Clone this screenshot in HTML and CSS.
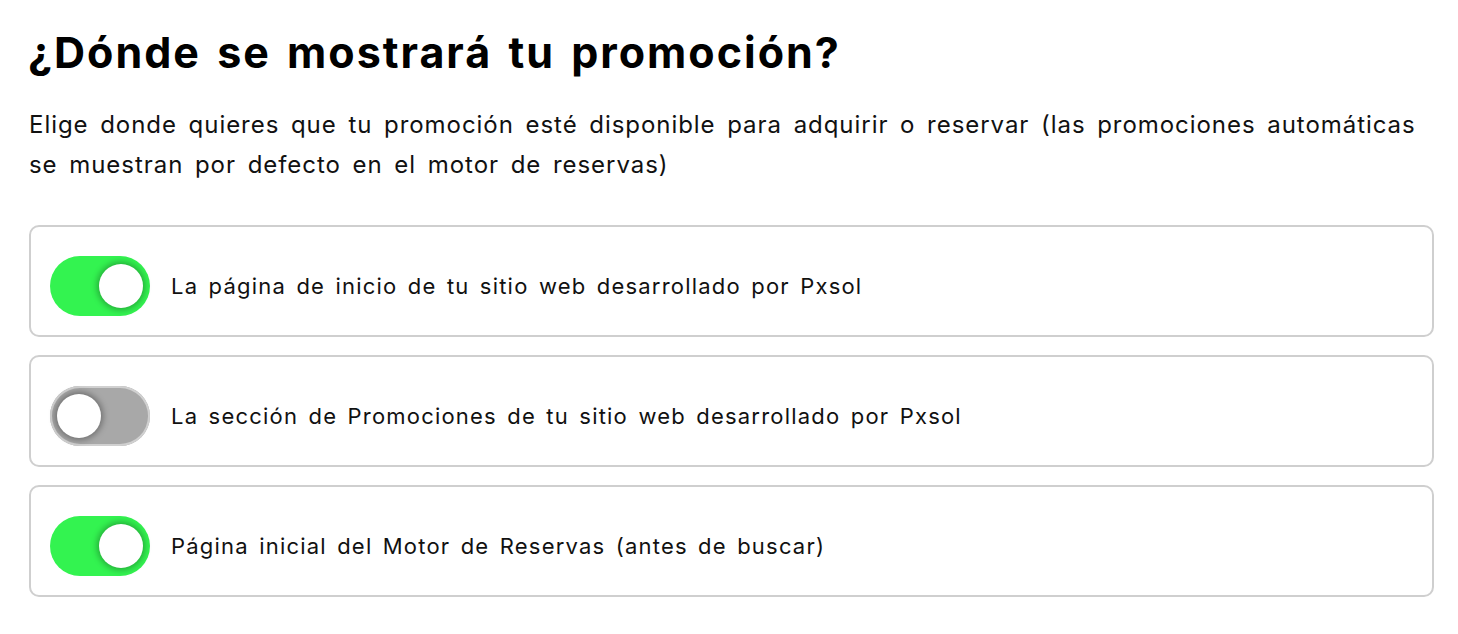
FILE: index.html
```html
<!DOCTYPE html>
<html lang="es">
<head>
  <meta charset="UTF-8">
  <title>Promoción</title>
  <link rel="stylesheet" href="styles.css">
</head>
<body>

  <h1>¿Dónde se mostrará tu promoción?</h1>

  <p class="intro">Elige donde quieres que tu promoción esté disponible para adquirir o reservar (las promociones automáticas se muestran por defecto en el motor de reservas)</p>

  <div class="options">
    <label class="option">
      <input type="checkbox" checked>
      <span class="switch"></span>
      <span class="option-text">La página de inicio de tu sitio web desarrollado por Pxsol</span>
    </label>

    <label class="option">
      <input type="checkbox">
      <span class="switch"></span>
      <span class="option-text">La sección de Promociones de tu sitio web desarrollado por Pxsol</span>
    </label>

    <label class="option">
      <input type="checkbox" checked>
      <span class="switch"></span>
      <span class="option-text">Página inicial del Motor de Reservas (antes de buscar)</span>
    </label>
  </div>

</body>
</html>
```

FILE: styles.css
```css
body { font-family: Inter, "Liberation Sans", sans-serif; margin: 0; padding: 25px 24px 0 29px; color: #000; background: #fff; }
h1 { font-size: 43px; font-weight: 700; line-height: 54px; margin: 0 0 26px -1px; letter-spacing: 2px; word-spacing: 4px; }
.intro { font-size: 24px; line-height: 40px; margin: 0 0 40px; color: #111; letter-spacing: 0.95px; word-spacing: 4px; }
.options { display: flex; flex-direction: column; gap: 18px; }
.option { display: flex; align-items: center; gap: 21px; border: 2px solid #cfcfcf; border-radius: 10px; padding: 29px 19px 19px; cursor: pointer; }
.option input { display: none; }
.option-text { font-size: 22px; color: #111; letter-spacing: 1.2px; word-spacing: 3px; }
.switch { position: relative; flex: none; width: 100px; height: 60px; border-radius: 30px; background: #a8a8a8; box-shadow: inset 0 0 0 2px #d0d0d0; }
.switch::after { content: ""; position: absolute; top: 8px; left: 7px; width: 44px; height: 44px; border-radius: 50%; background: #fff; box-shadow: 0 0 6px 2px rgba(0, 0, 0, 0.35); }
.option input:checked + .switch { background: #33f350; box-shadow: none; }
.option input:checked + .switch::after { left: 49px; box-shadow: 0 0 6px 2px rgba(0, 0, 0, 0.3); }
```
